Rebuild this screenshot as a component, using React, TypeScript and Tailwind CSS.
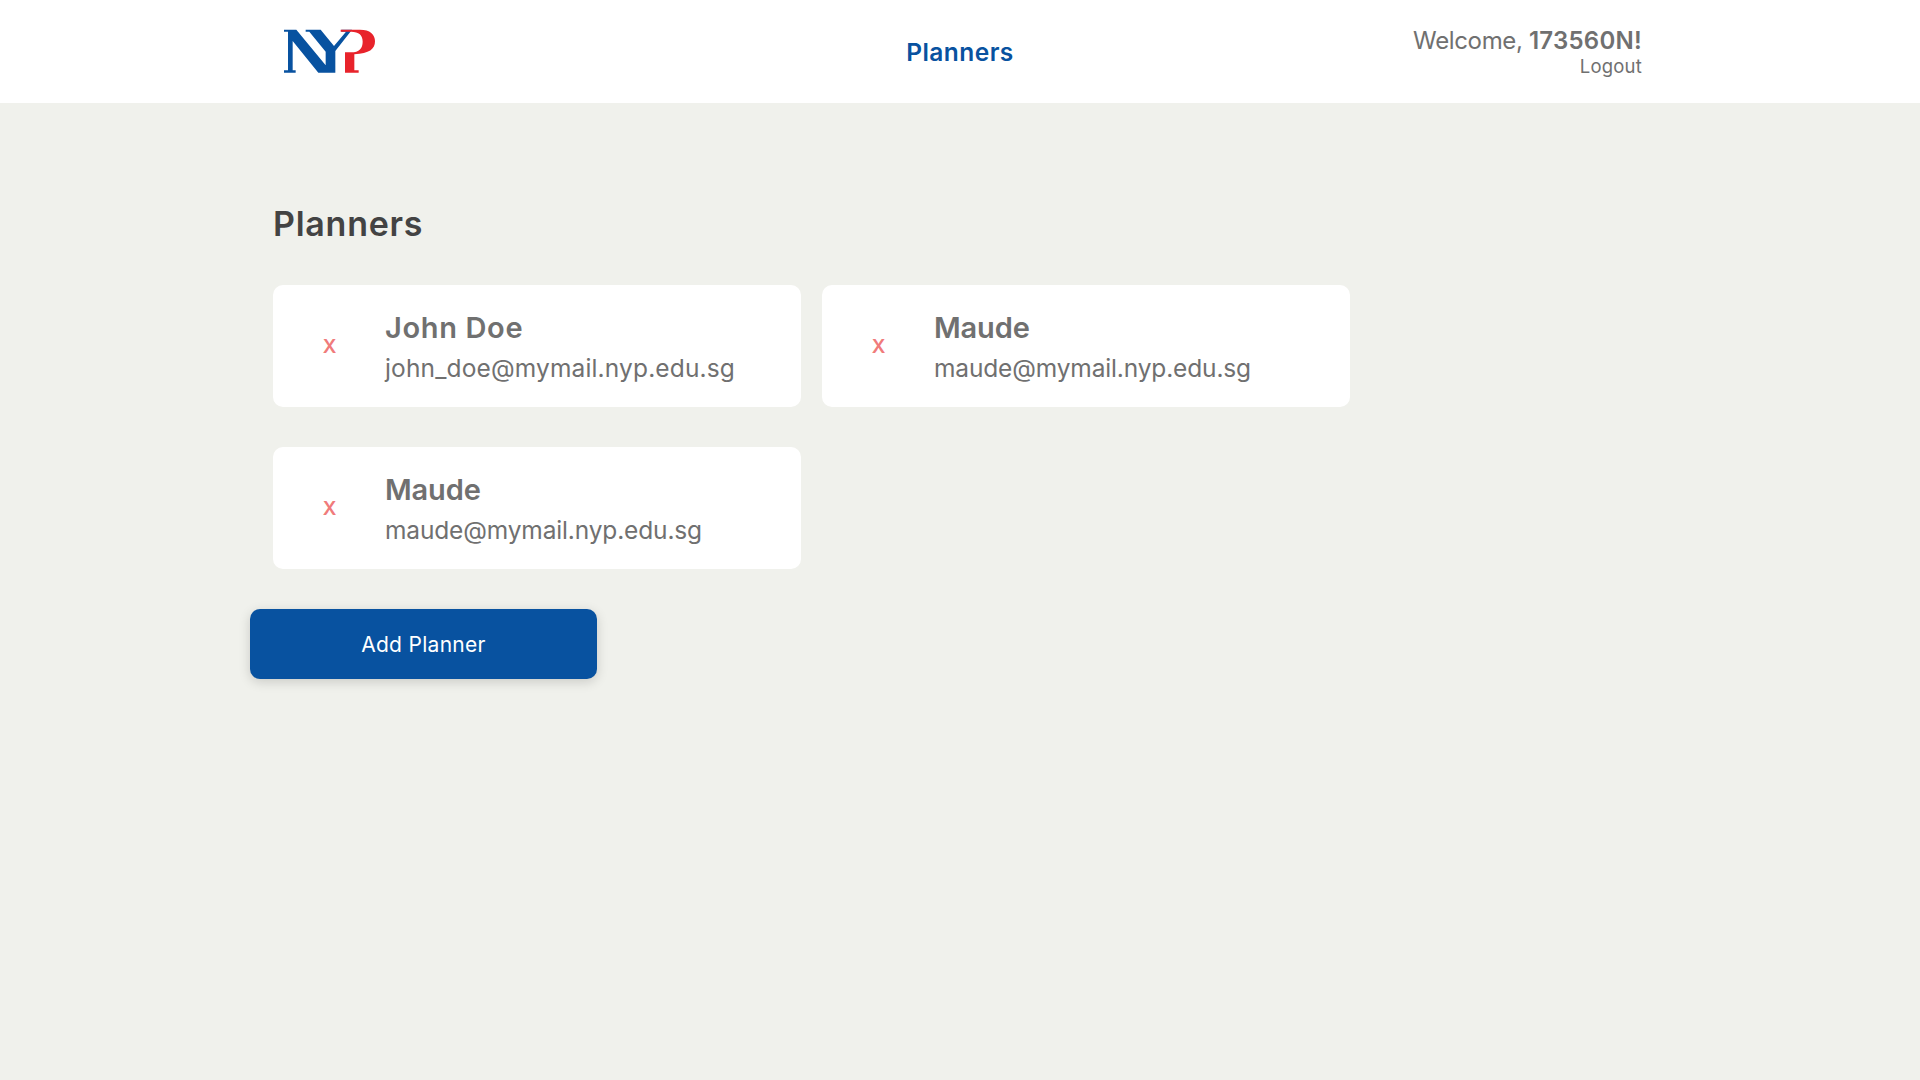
import React from "react";

type Planner = { name: string; email: string; nameSpacing: string; emailSpacing: string };

const planners: Planner[] = [
  {
    name: "John Doe",
    email: "john_doe@mymail.nyp.edu.sg",
    nameSpacing: "tracking-[0.65px]",
    emailSpacing: "tracking-[0.15px]",
  },
  {
    name: "Maude",
    email: "maude@mymail.nyp.edu.sg",
    nameSpacing: "tracking-[-0.15px]",
    emailSpacing: "tracking-[-0.15px]",
  },
  {
    name: "Maude",
    email: "maude@mymail.nyp.edu.sg",
    nameSpacing: "tracking-[-0.15px]",
    emailSpacing: "tracking-[-0.15px]",
  },
];

function Logo() {
  return (
    <svg width="120" height="70" viewBox="0 0 360 210" aria-label="NYP">
      <path
        d="M42 44H79L167 151V110L118 50H107V44H152L192 93L228 50H214V44H246L196 108V173H145L68 78V166H77V173H42V166H54V50H42Z"
        fill="#0852a0"
      />
      <path
        d="M212 44H270C300 44 315 58 315 79C315 102 298 116 253 118V166H266V173H225V112H243C268 112 278 100 278 80C278 60 267 50 243 50H212Z"
        fill="#e8232b"
      />
    </svg>
  );
}

function PlannerCard({ planner }: { planner: Planner }) {
  return (
    <article className="flex h-[122px] w-[528px] items-center rounded-[10px] bg-white">
      <button className="w-[113px] pt-[2px] text-center text-[19px] leading-6 font-semibold text-[#f07b7b]">X</button>
      <div className="-ml-px">
        <h2 className={`text-[29px] leading-9 font-semibold ${planner.nameSpacing}`}>{planner.name}</h2>
        <p className={`mt-[7px] text-[24.5px] leading-[30px] ${planner.emailSpacing}`}>{planner.email}</p>
      </div>
    </article>
  );
}

export default function App() {
  return (
    <div className="min-h-screen bg-[#f0f1ec] font-['Inter',sans-serif] text-[#707070]">
      <header className="grid h-[103px] grid-cols-3 bg-white px-[278px]">
        <div className="-ml-2 pt-[15px]">
          <Logo />
        </div>
        <nav className="flex items-center justify-center">
          <a className="text-[24.5px] leading-[30px] font-semibold tracking-[0.45px] text-[#0852a0]">Planners</a>
        </nav>
        <div className="pt-[26px] text-right">
          <p className="text-[24px] leading-[30px] tracking-[-0.35px]">
            Welcome, <span className="font-semibold tracking-[0.25px]">173560N!</span>
          </p>
          <a className="-mt-px block text-[18.5px] leading-[22px] tracking-[0.2px]">Logout</a>
        </div>
      </header>
      <main className="pt-[101px] pl-[273px]">
        <h1 className="text-[34px] leading-10 font-semibold tracking-[0.75px] text-[#434343]">Planners</h1>
        <section className="mt-[41px] flex w-[1100px] flex-wrap gap-x-[21px] gap-y-10">
          {planners.map((planner, i) => (
            <PlannerCard key={i} planner={planner} />
          ))}
        </section>
        <button className="mt-10 -ml-[23px] h-[70px] w-[347px] rounded-[10px] bg-[#0852a0] pt-px text-[21px] tracking-[0.3px] text-white shadow-[0_3px_12px_rgba(0,0,0,0.16)]">
          Add Planner
        </button>
      </main>
    </div>
  );
}
